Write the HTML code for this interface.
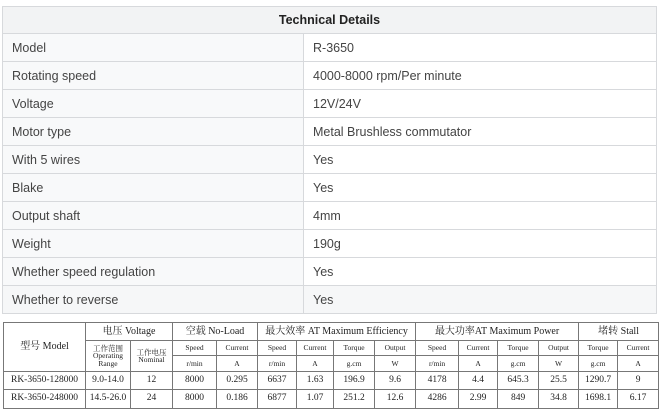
<!DOCTYPE html>
<html><head><meta charset="utf-8"><style>
body{margin:0;width:661px;height:419px;background:#fff;overflow:hidden;font-family:"Liberation Sans",sans-serif;}
#t1{position:absolute;left:2px;top:6px;width:655px;border-collapse:collapse;font-size:12.5px;color:#444;}
#t1 td,#t1 th{border:1px solid #d7d9dc;height:27px;padding:0 0 0 9px;text-align:left;}
#t1 th{background:#f2f3f4;text-align:center;font-size:12.5px;color:#222;padding:0;height:26px;}
#t1 td.l{background:#f8f9fa;width:291px;}
#t1 tr.g td{background:#f6f7f8;}
#t2{position:absolute;left:3px;top:322px;width:655px;border-collapse:collapse;font-family:"Liberation Serif","Noto Serif CJK SC",serif;font-size:9px;color:#222;table-layout:fixed;}
#t2 td{border:1px solid #777;text-align:center;padding:0;line-height:1;}
#t2 .s{font-size:7.5px;}
#t2 tr.d td{font-size:9.5px;}
#t2 tr.d2 td{border-top:1.5px solid #111;}
</style></head><body>
<table id="t1">
<tr><th colspan="2">Technical Details</th></tr>
<tr><td class="l">Model</td><td>R-3650</td></tr>
<tr><td class="l">Rotating speed</td><td>4000-8000 rpm/Per minute</td></tr>
<tr><td class="l">Voltage</td><td>12V/24V</td></tr>
<tr><td class="l">Motor type</td><td>Metal Brushless commutator</td></tr>
<tr><td class="l">With 5 wires</td><td>Yes</td></tr>
<tr><td class="l">Blake</td><td>Yes</td></tr>
<tr><td class="l">Output shaft</td><td>4mm</td></tr>
<tr><td class="l">Weight</td><td>190g</td></tr>
<tr><td class="l">Whether speed regulation</td><td>Yes</td></tr>
<tr class="g"><td class="l">Whether to reverse</td><td>Yes</td></tr>
</table>
<table id="t2">
<colgroup><col style="width:82px"><col style="width:45px"><col style="width:42px"><col style="width:44px"><col style="width:41px"><col style="width:39px"><col style="width:37px"><col style="width:41px"><col style="width:41px"><col style="width:43px"><col style="width:39px"><col style="width:41px"><col style="width:40px"><col style="width:39px"><col style="width:41px"></colgroup>
<tr style="height:18px"><td rowspan="3" style="font-size:10px">型号 Model</td><td colspan="2" style="font-size:10px">电压 Voltage</td><td colspan="2" style="font-size:10px">空载 No-Load</td><td colspan="4" style="font-size:10px">最大效率 AT Maximum Efficiency</td><td colspan="4" style="font-size:10px">最大功率AT Maximum Power</td><td colspan="2" style="font-size:10px">堵转 Stall</td></tr>
<tr style="height:15px"><td rowspan="2" class="s">工作范围<br>Operating<br>Range</td><td rowspan="2" class="s">工作电压<br>Nominal</td><td class="s">Speed</td><td class="s">Current</td><td class="s">Speed</td><td class="s">Current</td><td class="s">Torque</td><td class="s">Output</td><td class="s">Speed</td><td class="s">Current</td><td class="s">Torque</td><td class="s">Output</td><td class="s">Torque</td><td class="s">Current</td></tr>
<tr style="height:16px"><td class="s">r/min</td><td class="s">A</td><td class="s">r/min</td><td class="s">A</td><td class="s">g.cm</td><td class="s">W</td><td class="s">r/min</td><td class="s">A</td><td class="s">g.cm</td><td class="s">W</td><td class="s">g.cm</td><td class="s">A</td></tr>
<tr class="d" style="height:18px"><td>RK-3650-128000</td><td>9.0-14.0</td><td>12</td><td>8000</td><td>0.295</td><td>6637</td><td>1.63</td><td>196.9</td><td>9.6</td><td>4178</td><td>4.4</td><td>645.3</td><td>25.5</td><td>1290.7</td><td>9</td></tr>
<tr class="d d2" style="height:19px"><td>RK-3650-248000</td><td>14.5-26.0</td><td>24</td><td>8000</td><td>0.186</td><td>6877</td><td>1.07</td><td>251.2</td><td>12.6</td><td>4286</td><td>2.99</td><td>849</td><td>34.8</td><td>1698.1</td><td>6.17</td></tr>
</table>
</body></html>
